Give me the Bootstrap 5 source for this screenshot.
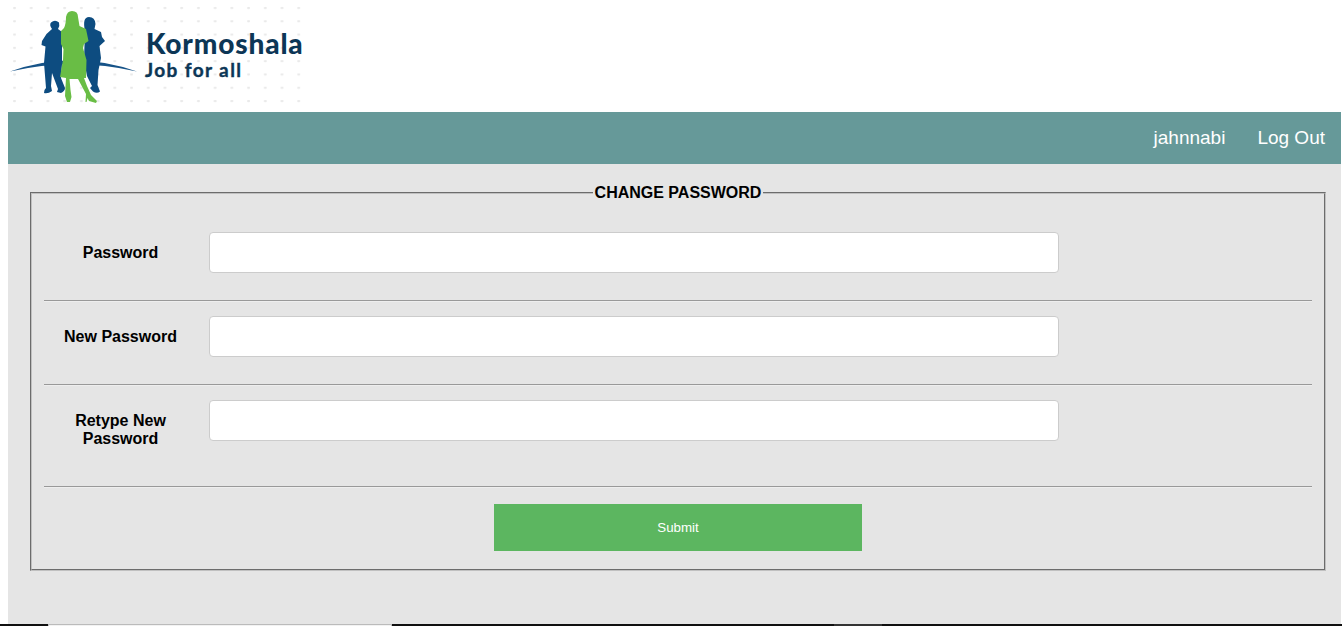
<!DOCTYPE html>
<html lang="en">
<head>
<meta charset="utf-8">
<title>Kormoshala - Change Password</title>
<link href="https://cdn.jsdelivr.net/npm/bootstrap@5.3.0/dist/css/bootstrap.min.css" rel="stylesheet">
<style>
body{height:626px;overflow:hidden;background:#fff;color:#000;font-family:"Liberation Sans",Arial,sans-serif;font-size:16px;line-height:18px}
.logo{width:320px;height:112px}
.topbar{height:52px;margin:0 1px 0 8px;background:#669999;padding:0 16px;gap:32px;font-size:19px}
.topbar a{color:#fff;line-height:52px}
.page-area{height:460px;margin:0 1px 0 8px;background:#e5e5e5;padding:20px 15px 0 22px}
.panel{height:387px;border:2px groove #c0c0c0;padding:0 12px}
.panel legend{float:none;width:auto;margin:0 auto;padding:0 2px;font-size:16px;line-height:18px;font-weight:bold}
.entries{padding-top:30px}
.entry{height:68px}
.entry.tall{height:86px}
.entry label{width:153px;padding-top:12px;font-weight:bold}
.entry input{width:850px;height:41px;margin-left:12px;border:1px solid #ccc;border-radius:4px}
.line{height:2px;margin:0 0 14px;border:0;border-top:1px solid #999;border-bottom:1px solid #eee;opacity:1}
.line.last{margin-bottom:16px}
.send{width:368px;height:47px;background:#5cb660;color:#fff;border:0;border-radius:0;font-size:13.33px;padding:0}
.taskbar{height:2px;background:#101010}
.taskbar i{height:2px}
</style>
</head>
<body>
<header>
<svg class="logo d-block" viewBox="0 0 320 112">
<defs><pattern id="dots" x="12" y="6" width="16.72" height="13.3" patternUnits="userSpaceOnUse"><rect x="1" y="1" width="3" height="2" rx="1" fill="#e9e9e9"/></pattern></defs>
<rect x="12" y="6" width="290" height="98" fill="url(#dots)"/>
<path d="M10 71.500Q73 49 137 71.500Q73 57 10 71.500Z" fill="#165388"/>
<g fill="#0d4c80">
<path d="M52 29Q49 25 51 22.500Q55 19 59 22.500Q60 26 58 29L62 32V64L61 78L65 88Q65 91 61 93L57 92L58 89L52 73L51 86L52 91Q48 94 44 93L44.500 90L46 88L44 63L45.500 46.500L41.500 45L42 41L46.500 34Z"/>
<path d="M85 31Q82 17 89 17Q95 17 95.500 24L94.500 29L101 32L102 37L105 41L99.500 46L101 58L98.500 70L97.500 85L100 91.500Q97 94 93 91.500L90 88L92 86L87 76L84 60Z"/></g>
<path d="M64 28Q66 24 66 17Q67 11 72 11Q78 11 78 17L79.500 26L86 29L88.500 41L84 44L83 48L86.500 60L86 78H84L87 86L91 95L97 101L96 103L89 101L87.500 98L86.500 102H85.500L86 94L78 79H69.500L70.500 90L71.500 97L70 102H67L65 96L66 78L60 77L63 60L63.500 49L61 44L61 31Z" fill="#69bd45"/>
<g font-family="Lato,sans-serif" font-weight="900" fill="#0c3656"><text x="146" y="54" font-size="28" letter-spacing=".3" textLength="157">Kormoshala</text>
<text x="145" y="76.500" font-size="19" font-weight="700" stroke="#0c3656" stroke-width=".4" textLength="96">Job for all</text></g>
</svg>
</header>
<nav class="topbar d-flex justify-content-end"><a class="text-decoration-none">jahnnabi</a><a class="text-decoration-none">Log Out</a></nav>
<main class="page-area">
<form>
<fieldset class="panel">
<legend>CHANGE PASSWORD</legend>
<div class="entries">
<div class="entry d-flex align-items-start"><label class="text-center" for="p1">Password</label><input id="p1" type="password"></div>
<hr class="line">
<div class="entry d-flex align-items-start"><label class="text-center" for="p2">New Password</label><input id="p2" type="password"></div>
<hr class="line">
<div class="entry tall d-flex align-items-start"><label class="text-center" for="p3">Retype New<br>Password</label><input id="p3" type="password"></div>
<hr class="line last">
</div>
<button type="button" class="btn send d-block mx-auto">Submit</button>
</fieldset>
</form>
</main>
<div class="taskbar d-flex"><i style="width:48px"></i><i style="width:344px;background:#f2f2f2;border:1px solid #bbb;border-bottom:0"></i><i style="width:442px"></i><i style="width:48px;background:#333"></i></div>
<script src="https://cdn.jsdelivr.net/npm/bootstrap@5.3.0/dist/js/bootstrap.bundle.min.js"></script>
</body>
</html>
